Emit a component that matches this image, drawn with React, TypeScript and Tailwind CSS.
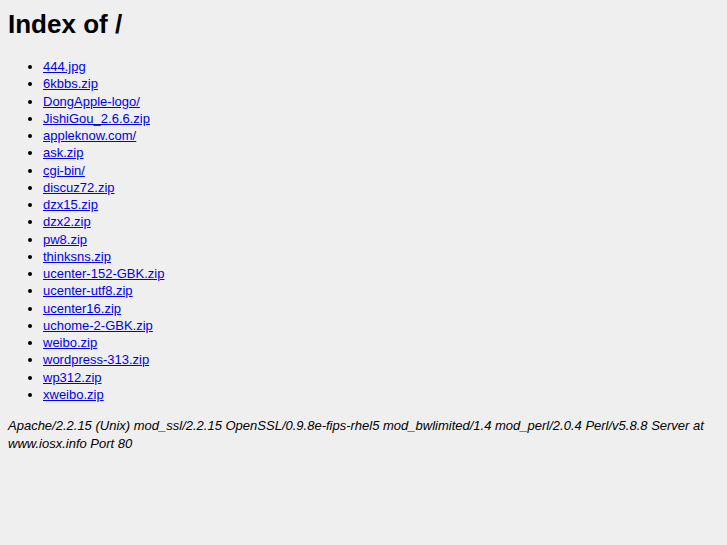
import React from "react";

const files = [
  "444.jpg",
  "6kbbs.zip",
  "DongApple-logo/",
  "JishiGou_2.6.6.zip",
  "appleknow.com/",
  "ask.zip",
  "cgi-bin/",
  "discuz72.zip",
  "dzx15.zip",
  "dzx2.zip",
  "pw8.zip",
  "thinksns.zip",
  "ucenter-152-GBK.zip",
  "ucenter-utf8.zip",
  "ucenter16.zip",
  "uchome-2-GBK.zip",
  "weibo.zip",
  "wordpress-313.zip",
  "wp312.zip",
  "xweibo.zip",
];

export default function App() {
  return (
    <div
      className="min-h-[545px] w-full bg-[#efefef] px-2 pt-[9px] text-[13px] text-black"
      style={{ fontFamily: '"Liberation Sans", Arial, sans-serif' }}
    >
      <h1 className="text-[26px] font-bold leading-[30px]">Index of /</h1>
      <ul className="mt-[19px] list-disc pl-[35px] leading-[17.25px]">
        {files.map((f) => (
          <li key={f}>
            <a href="#" className="text-[#0000ee] underline">
              {f}
            </a>
          </li>
        ))}
      </ul>
      <address className="mt-[14px] italic leading-[18px]">
        Apache/2.2.15 (Unix) mod_ssl/2.2.15 OpenSSL/0.9.8e-fips-rhel5 mod_bwlimited/1.4 mod_perl/2.0.4 Perl/v5.8.8 Server at www.iosx.info Port 80
      </address>
    </div>
  );
}
